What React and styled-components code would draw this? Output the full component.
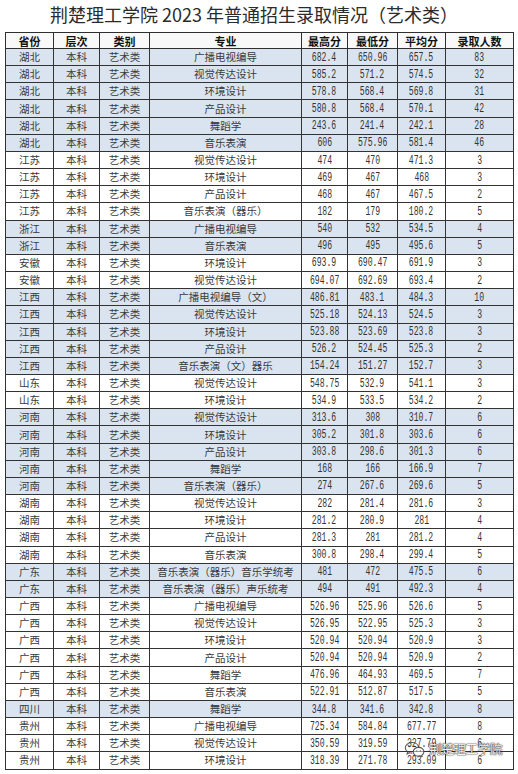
import React from 'react';
import styled, { createGlobalStyle } from 'styled-components';

const Global = createGlobalStyle`
  html, body { margin: 0; padding: 0; background: #fff; }
  body { font-family: "Noto Sans CJK SC", "Noto Sans", sans-serif; }
`;

const Page = styled.div`
  position: relative;
  width: 518px;
  height: 774px;
  overflow: hidden;
  background: #fff;
`;

const Title = styled.h1`
  margin: 0;
  height: 32px;
  padding-right: 10px;
  font-family: "Noto Sans CJK SC", sans-serif;
  font-size: 18px;
  font-weight: 400;
  line-height: 28px;
  color: #2b2b2b;
  text-align: center;
  white-space: nowrap;
`;

const Table = styled.table`
  margin-left: 5px;
  width: 508px;
  border-collapse: collapse;
  table-layout: fixed;
`;

const Col = styled.col`
  width: ${p => p.$w}px;
`;

const HeadRow = styled.tr`
  height: 16px;
  background: #f8f8f8;
`;

const Th = styled.th`
  padding: 0;
  border: 1px solid #2f2f2f;
  font-family: "Noto Sans CJK SC", sans-serif;
  font-size: 11px;
  font-weight: 700;
  line-height: 14px;
  color: #111;
  text-align: center;
  white-space: nowrap;
`;

const Row = styled.tr`
  height: 17.17px;
  background: ${p => (p.$shade ? '#dae4f0' : '#ffffff')};
`;

const Td = styled.td`
  padding: 0;
  border: 1px solid #333;
  font-family: "Noto Sans CJK SC", sans-serif;
  font-size: 10.5px;
  line-height: 14px;
  color: #3a3a3a;
  text-align: center;
  white-space: nowrap;
  overflow: visible;
`;

const Num = styled.span`
  display: inline-block;
  font-family: "Liberation Mono", "DejaVu Sans Mono", monospace;
  font-size: 12px;
  line-height: 14px;
  color: #333;
  transform: scaleX(0.68);
`;

const Watermark = styled.div`
  position: absolute;
  left: 404px;
  top: 741px;
  display: flex;
  align-items: center;
  gap: 3px;
  pointer-events: none;
`;

const MarkText = styled.span`
  font-family: "Noto Sans CJK SC", sans-serif;
  font-size: 12.5px;
  line-height: 16px;
  color: rgba(255, 255, 255, 0.95);
  text-shadow: 0 0 1px rgba(30, 30, 30, 0.95), 0 0 1px rgba(30, 30, 30, 0.95), 0 0 2px rgba(30, 30, 30, 0.5);
  letter-spacing: -0.3px;
`;

const rows = [
  ['湖北', '广播电视编导', '682.4', '650.96', '657.5', '83'],
  ['湖北', '视觉传达设计', '585.2', '571.2', '574.5', '32'],
  ['湖北', '环境设计', '578.8', '568.4', '569.8', '31'],
  ['湖北', '产品设计', '580.8', '568.4', '570.1', '42'],
  ['湖北', '舞蹈学', '243.6', '241.4', '242.1', '28'],
  ['湖北', '音乐表演', '606', '575.96', '581.4', '46'],
  ['江苏', '视觉传达设计', '474', '470', '471.3', '3'],
  ['江苏', '环境设计', '469', '467', '468', '3'],
  ['江苏', '产品设计', '468', '467', '467.5', '2'],
  ['江苏', '音乐表演（器乐）', '182', '179', '180.2', '5'],
  ['浙江', '广播电视编导', '540', '532', '534.5', '4'],
  ['浙江', '音乐表演', '496', '495', '495.6', '5'],
  ['安徽', '环境设计', '693.9', '690.47', '691.9', '3'],
  ['安徽', '视觉传达设计', '694.07', '692.69', '693.4', '2'],
  ['江西', '广播电视编导（文）', '486.81', '483.1', '484.3', '10'],
  ['江西', '视觉传达设计', '525.18', '524.13', '524.5', '3'],
  ['江西', '环境设计', '523.88', '523.69', '523.8', '3'],
  ['江西', '产品设计', '526.2', '524.45', '525.3', '2'],
  ['江西', '音乐表演（文）器乐', '154.24', '151.27', '152.7', '3'],
  ['山东', '视觉传达设计', '548.75', '532.9', '541.1', '3'],
  ['山东', '环境设计', '534.9', '533.5', '534.2', '2'],
  ['河南', '视觉传达设计', '313.6', '308', '310.7', '6'],
  ['河南', '环境设计', '305.2', '301.8', '303.6', '6'],
  ['河南', '产品设计', '303.8', '298.6', '301.3', '6'],
  ['河南', '舞蹈学', '168', '166', '166.9', '7'],
  ['河南', '音乐表演（器乐）', '274', '267.6', '269.6', '5'],
  ['湖南', '视觉传达设计', '282', '281.4', '281.6', '3'],
  ['湖南', '环境设计', '281.2', '280.9', '281', '4'],
  ['湖南', '产品设计', '281.3', '281', '281.2', '4'],
  ['湖南', '音乐表演', '300.8', '298.4', '299.4', '5'],
  ['广东', '音乐表演（器乐）音乐学统考', '481', '472', '475.5', '6'],
  ['广东', '音乐表演（器乐）声乐统考', '494', '491', '492.3', '4'],
  ['广西', '广播电视编导', '526.96', '525.96', '526.6', '5'],
  ['广西', '视觉传达设计', '526.95', '522.95', '525.3', '3'],
  ['广西', '环境设计', '520.94', '520.94', '520.9', '3'],
  ['广西', '产品设计', '520.94', '520.94', '520.9', '2'],
  ['广西', '舞蹈学', '476.96', '464.93', '469.5', '7'],
  ['广西', '音乐表演', '522.91', '512.87', '517.5', '5'],
  ['四川', '舞蹈学', '344.8', '341.6', '342.8', '8'],
  ['贵州', '广播电视编导', '725.34', '584.84', '677.77', '8'],
  ['贵州', '视觉传达设计', '350.59', '319.59', '327.79', '6'],
  ['贵州', '环境设计', '318.39', '271.78', '293.09', '6'],
];

const shaded = new Set(['湖北', '浙江', '江西', '河南', '广东', '四川']);
const widths = [48, 46, 50, 152, 46, 50, 48, 68];
const heads = ['省份', '层次', '类别', '专业', '最高分', '最低分', '平均分', '录取人数'];

const WeChatIcon = () => (
  <svg width="22" height="16" viewBox="0 0 22 16" fill="none">
    <path
      d="M8 1.5C4.2 1.5 1.3 3.9 1.3 6.8c0 1.7 0.9 3.1 2.4 4.1l-0.6 2 2.3-1.2c0.8 0.2 1.7 0.4 2.6 0.4"
      stroke="rgba(60,60,60,0.85)"
      strokeWidth="1.1"
      strokeLinecap="round"
    />
    <path
      d="M8 1.5c3.5 0 6.3 2 6.7 4.7"
      stroke="rgba(60,60,60,0.85)"
      strokeWidth="1.1"
      strokeLinecap="round"
    />
    <path
      d="M14.6 6.4c-3 0-5.4 2-5.4 4.4s2.4 4.4 5.4 4.4c0.7 0 1.3-0.1 1.9-0.3l1.8 1-0.5-1.6c1.3-0.8 2.1-2 2.1-3.5 0-2.4-2.4-4.4-5.3-4.4z"
      stroke="rgba(60,60,60,0.85)"
      strokeWidth="1.1"
      fill="rgba(255,255,255,0.5)"
      strokeLinejoin="round"
    />
    <circle cx="5.6" cy="5.4" r="0.8" fill="rgba(60,60,60,0.85)" />
    <circle cx="10.2" cy="5.4" r="0.8" fill="rgba(60,60,60,0.85)" />
    <circle cx="12.9" cy="9.8" r="0.65" fill="rgba(60,60,60,0.85)" />
    <circle cx="16.4" cy="9.8" r="0.65" fill="rgba(60,60,60,0.85)" />
  </svg>
);

export default function App() {
  return (
    <Page>
      <Global />
      <Title>荆楚理工学院 2023 年普通招生录取情况（艺术类）</Title>
      <Table>
        <colgroup>
          {widths.map((w, i) => (
            <Col key={i} $w={w} />
          ))}
        </colgroup>
        <thead>
          <HeadRow>
            {heads.map(h => (
              <Th key={h}>{h}</Th>
            ))}
          </HeadRow>
        </thead>
        <tbody>
          {rows.map((r, i) => (
            <Row key={i} $shade={shaded.has(r[0])}>
              <Td>{r[0]}</Td>
              <Td>本科</Td>
              <Td>艺术类</Td>
              <Td>{r[1]}</Td>
              <Td><Num>{r[2]}</Num></Td>
              <Td><Num>{r[3]}</Num></Td>
              <Td><Num>{r[4]}</Num></Td>
              <Td><Num>{r[5]}</Num></Td>
            </Row>
          ))}
        </tbody>
      </Table>
      <Watermark>
        <WeChatIcon />
        <MarkText>荆楚理工学院</MarkText>
      </Watermark>
    </Page>
  );
}
